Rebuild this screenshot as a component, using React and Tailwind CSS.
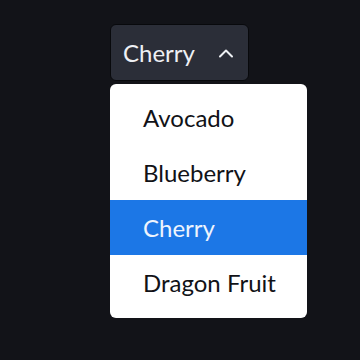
import React from "react";

export default function App() {
  const items = ["Avocado", "Blueberry", "Cherry", "Dragon Fruit"];
  return (
    <div
      className="w-[360px] h-[360px] bg-[#121318] relative"
      style={{ fontFamily: "Lato, 'Open Sans', sans-serif" }}
    >
      <div className="pt-[24px] pl-[110px]">
        <button className="flex items-center h-[57px] w-[139px] rounded-[6px] border border-[#08090c] bg-[#2b2e38] pl-[12px] pr-[14px] text-[24px] text-[#eef0f4]">
          <span>Cherry</span>
          <svg
            className="ml-auto"
            width="16"
            height="10"
            viewBox="0 0 16 10"
            fill="none"
            stroke="#eef0f4"
            strokeWidth="2"
            strokeLinecap="round"
            strokeLinejoin="round"
          >
            <path d="M2 8.5 L8 2.5 L14 8.5" />
          </svg>
        </button>
      </div>
      <div className="absolute left-[110px] top-[84px] w-[197px] rounded-[6px] bg-white pt-[6px] pb-[8px]">
        {items.map((it) => (
          <div
            key={it}
            className={
              it === "Cherry"
                ? "h-[55px] flex items-center pl-[33px] text-[24px] bg-[#1c77e6] text-[#eef4fd]"
                : "h-[55px] flex items-center pl-[33px] text-[24px] text-[#111217]"
            }
          >
            {it}
          </div>
        ))}
      </div>
    </div>
  );
}
